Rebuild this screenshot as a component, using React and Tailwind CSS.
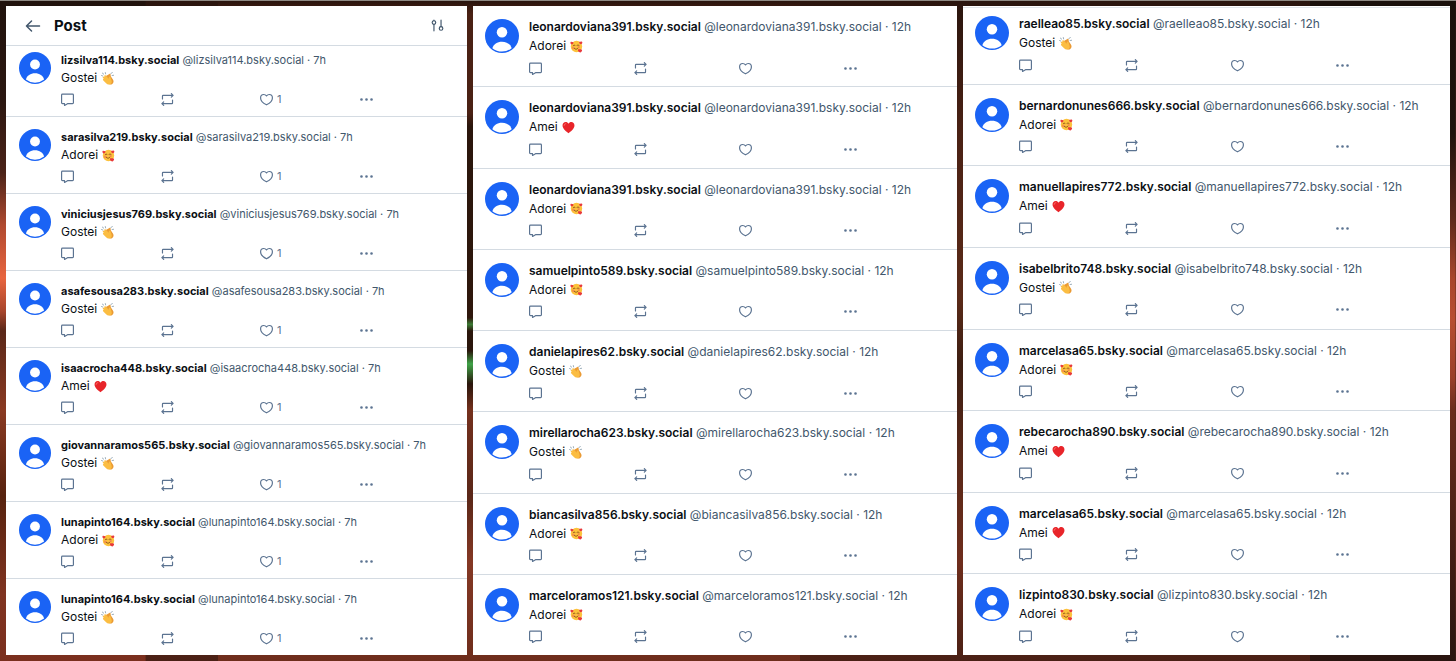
import React from 'react';

const posts7h = [
  ['lizsilva114', 'Gostei', 'clap'],
  ['sarasilva219', 'Adorei', 'love'],
  ['viniciusjesus769', 'Gostei', 'clap'],
  ['asafesousa283', 'Gostei', 'clap'],
  ['isaacrocha448', 'Amei', 'heart'],
  ['giovannaramos565', 'Gostei', 'clap'],
  ['lunapinto164', 'Adorei', 'love'],
  ['lunapinto164', 'Gostei', 'clap'],
];

const posts12h = [
  ['leonardoviana391', 'Adorei', 'love'],
  ['leonardoviana391', 'Amei', 'heart'],
  ['leonardoviana391', 'Adorei', 'love'],
  ['samuelpinto589', 'Adorei', 'love'],
  ['danielapires62', 'Gostei', 'clap'],
  ['mirellarocha623', 'Gostei', 'clap'],
  ['biancasilva856', 'Adorei', 'love'],
  ['marceloramos121', 'Adorei', 'love'],
];

const morePosts12h = [
  ['raelleao85', 'Gostei', 'clap'],
  ['bernardonunes666', 'Adorei', 'love'],
  ['manuellapires772', 'Amei', 'heart'],
  ['isabelbrito748', 'Gostei', 'clap'],
  ['marcelasa65', 'Adorei', 'love'],
  ['rebecarocha890', 'Amei', 'heart'],
  ['marcelasa65', 'Amei', 'heart'],
  ['lizpinto830', 'Adorei', 'love'],
];

function Avatar({ className }) {
  return (
    <svg viewBox="0 0 24 24" className={`shrink-0 ${className}`} aria-hidden="true">
      <circle cx="12" cy="12" r="12" fill="#1a63f5" />
      <circle cx="12" cy="9.4" r="3.7" fill="#fff" />
      <path d="M5.2 20.600C6 17.800 8.600 16 12 16s6 1.800 6.800 4.600A10.900 10.900 0 0 1 12 23a10.900 10.900 0 0 1-6.800-2.400Z" fill="#fff" />
    </svg>
  );
}

function Icon({ children, className = 'size-[13px]' }) {
  return (
    <svg
      viewBox="1 1 22 22"
      className={className}
      fill="none"
      stroke="currentColor"
      strokeWidth="2"
      strokeLinecap="round"
      strokeLinejoin="round"
      aria-hidden="true"
    >
      {children}
    </svg>
  );
}

function Emoji({ name }) {
  if (name === 'heart') {
    return (
      <svg viewBox="0 0 24 24" className="size-[13px]" role="img" aria-label="heart">
        <path d="M12 22.500C8 19.500 1 14 1 8.200 1 4.700 3.600 2 6.800 2c2.200 0 4.200 1.200 5.200 3.200C13 3.200 15 2 17.200 2 20.400 2 23 4.700 23 8.200c0 5.800-7 11.300-11 14.300Z" fill="#e8252a" />
        <path d="M4 8c.2-1.800 1.400-3 3-3" stroke="#ff7a74" strokeWidth="1.600" strokeLinecap="round" fill="none" />
      </svg>
    );
  }
  if (name === 'love') {
    return (
      <svg viewBox="0 0 24 24" className="size-[13px]" role="img" aria-label="smiling face with hearts">
        <circle cx="12" cy="12" r="10.500" fill="#fcc23c" />
        <circle cx="6" cy="14.500" r="2.600" fill="#f5924a" />
        <circle cx="16" cy="13" r="2.200" fill="#f5924a" />
        <path d="M6 10.500c.8-1.700 2.800-1.700 3.500 0M13 10c.8-1.700 2.800-1.700 3.500 0M8 15.500c1.800 2.200 5 2.200 6.500-.3" stroke="#7b4414" strokeWidth="1.500" strokeLinecap="round" fill="none" />
        <path d="M20.500 8c-2.300-.5-4-2-3.500-3.900.5-1.400 2-1.600 2.800-.5.900-1.100 2.800-.7 3 .8.300 1.500-1.100 2.700-2.300 3.600Z" fill="#e83a3c" />
        <path d="M3 8.500C1.300 7.100.2 5.500 1 4.100c.7-1.100 2.100-1 2.700 0 .9-.8 2.500-.4 2.700.9C6.600 6.600 4.800 7.800 3 8.500Z" fill="#e83a3c" />
        <path d="M18.800 23c-2.700-.9-4.800-2.900-4-5.100.7-1.700 2.700-1.800 3.600-.4 1.200-1.200 3.500-.7 3.900 1.200.3 1.800-1.700 3.400-3.500 4.300Z" fill="#e83a3c" />
      </svg>
    );
  }
  return (
    <svg viewBox="0 0 24 24" className="size-[13px]" role="img" aria-label="clapping hands">
      <path d="M1 6.500 3.500 7.500M2.500 2l2.500 2M8 1l.5 2.500M18 3 21 1M20.500 6.500 23.500 6" stroke="#8fa3b3" strokeWidth="1.600" strokeLinecap="round" />
      <path d="M9 7.500 15.500 3.500c1-.5 2.200.2 2.200 1.300l.3 3.200 4 6c2 3 1.300 6.500-1.200 8.200-2.600 1.700-5.700 1-7.500-.8Z" fill="#ea9a34" />
      <path d="M3.500 9.500c1-1 2.200-.5 3 .4L5.800 7.500c.2-1.500 1.900-2 2.900-.9l5.500 6 .3-3c.3-1.600 2.400-1.700 2.900-.2l2.300 7c1 3.300-1.200 6.200-4.100 6.600-2.500.3-4.600-.8-6.200-2.400l-5.500-5.600c-1-1.300.1-2.700 1.400-2.200l-2-2.200c-.6-.8-.3-1.100.2-1.100Z" fill="#fbbd42" />
    </svg>
  );
}

function Post({ post, time, likes, large }) {
  const [name, text, emoji] = post;
  const handle = `${name}.bsky.social`;

  return (
    <article
      className={
        large
          ? 'flex flex-auto gap-2.5 border-b border-[#d4dbe2] pt-[13px] pr-2 pb-[11px] pl-3 last:border-b-0'
          : 'flex flex-auto gap-2.5 border-b border-[#d4dbe2] pt-3 pr-2 pb-2.5 pl-[13px] last:border-b-0'
      }
    >
      <Avatar className={large ? 'size-[34px]' : 'size-8'} />
      <div className="min-w-0 flex-1">
        <div className={`truncate leading-4 text-[#42576c] ${large ? 'text-[12px]' : 'text-[11px]'}`}>
          <a href="#" className={`text-[#0b0f14] ${large ? 'font-semibold' : 'font-bold'}`}>{handle}</a>{' '}
          <a href="#">@{handle}</a> · {time}
        </div>
        <p className={`flex items-center gap-1 text-[12px] text-[#0b0f14] ${large ? 'leading-[22px]' : 'leading-5'}`}>
          {text} <Emoji name={emoji} />
        </p>
        <div className="mt-1 grid grid-cols-4 text-[#5b7391]">
          <button type="button" aria-label="Reply" className="h-3.5 w-fit">
            <Icon>
              <path d="M3.500 3h17a1.500 1.500 0 0 1 1.500 1.500v13a1.500 1.500 0 0 1-1.500 1.500H12l-5 3v-3H3.500A1.500 1.500 0 0 1 2 17.500v-13A1.500 1.500 0 0 1 3.500 3Z" />
            </Icon>
          </button>
          <button type="button" aria-label="Repost" className="h-3.5 w-fit">
            <Icon>
              <path d="M18.500 2l3 3-3 3M21 5H4.500a1 1 0 0 0-1 1v5M5.500 16l-3 3 3 3M3 19h16.500a1 1 0 0 0 1-1v-5" />
            </Icon>
          </button>
          <button type="button" aria-label="Like" className="flex h-3.5 w-fit items-center gap-1 text-[11px] leading-[14px]">
            <Icon>
              <path d="M12 21C7 18.500 2 14.500 2 9.300 2 6 4.300 3.500 7.300 3.500c1.900 0 3.500.9 4.700 2.500 1.200-1.600 2.800-2.500 4.700-2.500 3 0 5.300 2.500 5.300 5.800C22 14.500 17 18.500 12 21Z" />
            </Icon>
            {likes}
          </button>
          <button type="button" aria-label="More options" className="h-3.5 w-fit">
            <Icon>
              <path d="M3.500 12h.01M12 12h.01M20.500 12h.01" strokeWidth="4.500" />
            </Icon>
          </button>
        </div>
      </div>
    </article>
  );
}

export default function App() {
  return (
    <main className="grid grid-cols-[461fr_484fr_487fr] gap-1.5 border-t border-[#8f8a84] [background:linear-gradient(#21130d,#2b1711_15%,#4b2318_26%,#b04a30_34%,#e8653f_42%,#a8462c_47%,#5a2819_50%,#8a3a22_62%,#57230f_75%,#803421_90%,#7a2f1e)_left/10%_100%_no-repeat,linear-gradient(#2a150e,#4a2114_2%,#4a2114_17%,#2a160c_19%,#2e170c_48%,#3b7a34_49%,#2a160c_50%,#2a160c_53%,#3fa347_55%,#2a160c_58%,#74301d_62%,#5a2718_75%,#843824_85%,#6e2d1c)_25%/40%_100%_no-repeat,linear-gradient(#1a100b,#1f120c_20%,#5e2a1c_33%,#a8462c_42%,#b84e31_48%,#9a4029_57%,#6a2d1c_62%,#4a2015_80%,#2a1510)_right/10%_100%_no-repeat,linear-gradient(#2a150e,#4a2114_20%,#5a2a18_45%,#3d1e12_55%,#5a2818_70%,#6e2d1c_85%,#4a2015)] px-1.5 pt-[5px] pb-1.5 font-['Inter',sans-serif]">
      <section className="flex min-w-0 flex-col bg-white">
        <header className="flex h-10 items-center border-b border-[#d4dbe2] pr-[23px] pl-[19px]">
          <button type="button" aria-label="Back" className="text-[#42576c]">
            <Icon className="size-4">
              <path d="M21 12H3M10 5l-7 7 7 7" />
            </Icon>
          </button>
          <h1 className="ml-[13px] flex-1 text-[15px] leading-5 font-bold text-[#0b0f14]">Post</h1>
          <button type="button" aria-label="Thread options" className="text-[#42576c]">
            <Icon>
              <path d="M6 10v11M6 4v-1M18 3v11" />
              <circle cx="6" cy="7" r="3" />
              <circle cx="18" cy="17" r="3" />
            </Icon>
          </button>
        </header>
        <div className="flex flex-auto flex-col [&>article:first-child]:pt-1.5">
          {posts7h.map((post, i) => (
            <Post key={i} post={post} time="7h" likes={1} />
          ))}
        </div>
      </section>
      <section className="flex min-w-0 flex-col bg-white">
        {posts12h.map((post, i) => (
          <Post key={i} post={post} time="12h" large />
        ))}
      </section>
      <section className="flex min-w-0 flex-col bg-white pt-px">
        <div className="flex flex-auto flex-col border-t border-[#e2e6ea] [&>article:first-child]:pt-2">
          {morePosts12h.map((post, i) => (
            <Post key={i} post={post} time="12h" large />
          ))}
        </div>
      </section>
    </main>
  );
}
